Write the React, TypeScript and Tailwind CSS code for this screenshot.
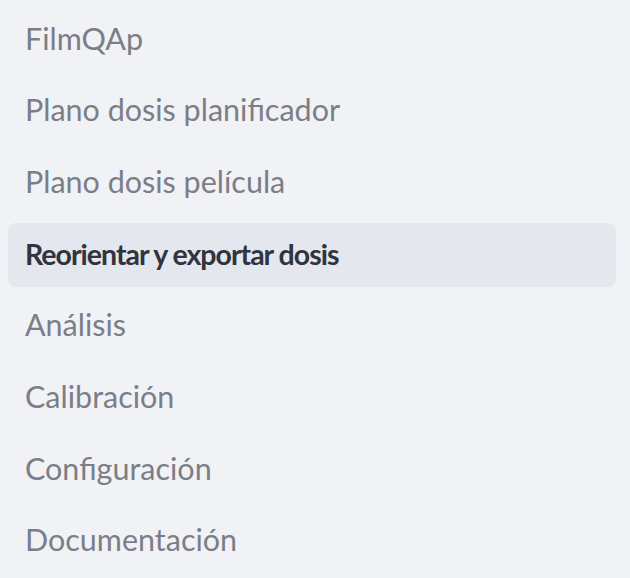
const items = [
  "FilmQAp",
  "Plano dosis planificador",
  "Plano dosis película",
  "Reorientar y exportar dosis",
  "Análisis",
  "Calibración",
  "Configuración",
  "Documentación",
];

const ACTIVE = 3;

export default function App() {
  return (
    <div className="w-[630px] h-[578px] overflow-hidden bg-[#f0f2f6] font-['Lato',sans-serif]">
      <nav className="flex flex-col gap-[7.7px] pt-2 pl-2 pr-[14px]">
        {items.map((label, i) => (
          <a
            key={label}
            className={
              i === ACTIVE
                ? "flex items-center h-16 px-[17px] pb-[2px] rounded-lg bg-[#e4e7ee] text-[#31333f] font-bold text-[28.5px] tracking-[-1px]"
                : "flex items-center h-16 px-[17px] pb-[3px] rounded-lg text-[#7c7e87] text-[30.5px]"
            }
          >
            {label}
          </a>
        ))}
      </nav>
    </div>
  );
}
